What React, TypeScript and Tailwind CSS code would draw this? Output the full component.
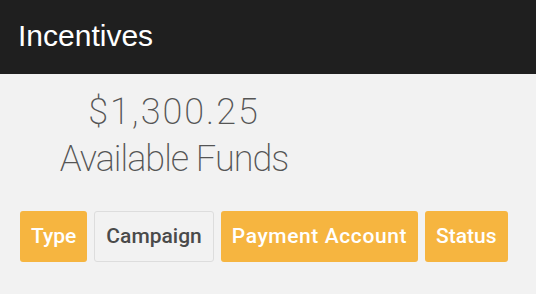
import React from "react";

export default function App() {
  const orange =
    "h-[51px] px-[11px] rounded-[3px] bg-[#f6b540] text-white flex items-center";
  return (
    <div className="min-h-screen w-full bg-[#f2f2f2]">
      <header className="h-[74px] bg-[#1f1f1f] px-[18px] flex items-center">
        <h1
          className="text-white text-[30px] leading-none font-normal -mt-[3px]"
          style={{ fontFamily: '"Liberation Sans", Arial, sans-serif' }}
        >
          Incentives
        </h1>
      </header>
      <div
        className="w-[348px] text-center text-[#555555] text-[36px] leading-[47px] font-extralight pt-[15px]"
        style={{ fontFamily: 'Roboto, "Liberation Sans", sans-serif' }}
      >
        <div className="tracking-[2px]">$1,300.25</div>
        <div className="tracking-[-1px]">Available Funds</div>
      </div>
      <div
        className="flex gap-[7px] pl-[20px] mt-[28px] text-[21px] font-medium"
        style={{ fontFamily: 'Roboto, "Liberation Sans", sans-serif' }}
      >
        <button className={orange}>Type</button>
        <button className="h-[51px] px-[11px] rounded-[3px] bg-[#f2f2f2] border border-[#dddddd] text-[#4a4a4a] flex items-center">
          Campaign
        </button>
        <button className={orange + " tracking-[0.6px]"}>Payment Account</button>
        <button className={orange}>Status</button>
      </div>
    </div>
  );
}
